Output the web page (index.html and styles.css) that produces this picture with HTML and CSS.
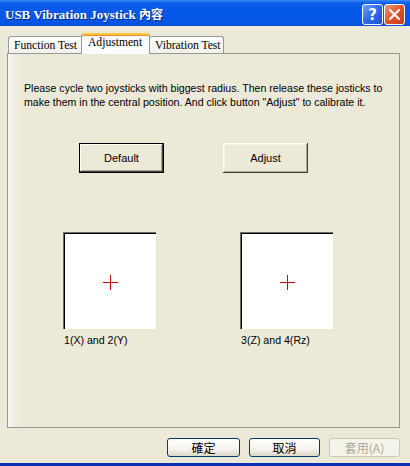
FILE: index.html
```html
<!DOCTYPE html>
<html>
<head>
    <title>USB Vibration Joystick 內容</title>
    <link rel="stylesheet" href="styles.css">
</head>
<body>
    <div class="window">
        <div class="titlebar">
            <span class="title">USB Vibration Joystick <span class="cjk">內容</span></span>
            <div class="caption-buttons">
                <div class="cap-btn help">?</div>
                <div class="cap-btn close">
                    <svg width="13" height="13" viewBox="0 0 13 13">
                        <path d="M2 2 L11 11 M11 2 L2 11" stroke="#fff" stroke-width="2.2" stroke-linecap="round"/>
                    </svg>
                </div>
            </div>
        </div>

        <div class="tabs">
            <div class="tab tab-function">Function Test</div>
            <div class="tab active">Adjustment</div>
            <div class="tab tab-vibration">Vibration Test</div>
        </div>

        <div class="panel">
            <p class="hint">Please cycle two joysticks with biggest radius. Then release these josticks to make them in the central position. And click button "Adjust" to calibrate it.</p>

            <div class="actions">
                <button class="classic default-btn">Default</button>
                <button class="classic">Adjust</button>
            </div>

            <div class="pads">
                <div class="pad">
                    <div class="pad-box"><div class="cross"></div></div>
                    <div class="pad-label">1(X) and 2(Y)</div>
                </div>
                <div class="pad">
                    <div class="pad-box"><div class="cross"></div></div>
                    <div class="pad-label">3(Z) and 4(Rz)</div>
                </div>
            </div>
        </div>

        <div class="footer">
            <button class="xp-btn ok">確定</button>
            <button class="xp-btn">取消</button>
            <button class="xp-btn" disabled>套用(A)</button>
        </div>
        <div class="frame-bottom"></div>
    </div>
</body>
</html>
```

FILE: styles.css
```css
body {
    margin: 0;
    background-color: #ece9d8;
    font-family: "Liberation Sans", Arial, sans-serif;
}
.window {
    width: 410px;
    height: 466px;
    display: flex;
    flex-direction: column;
    overflow: hidden;
}
.titlebar {
    height: 26px;
    flex-shrink: 0;
    display: flex;
    align-items: center;
    justify-content: space-between;
    padding: 0 5px 0 5px;
    background: linear-gradient(to bottom, #3b8cf6 0, #0a5ee8 3px, #0659ea 40%, #0455e4 85%, #0a4fd4 100%);
}
.title {
    color: #fff;
    font-family: "Liberation Serif", "Noto Sans CJK TC", serif;
    font-weight: bold;
    font-size: 13px;
    text-shadow: 1px 1px 0 #0a2a80;
    padding-top: 1px;
}
.title .cjk {
    font-family: "Noto Sans CJK TC", sans-serif;
    font-size: 12px;
}
.caption-buttons {
    display: flex;
    gap: 1px;
    padding-top: 3px;
}
.cap-btn {
    width: 19px;
    height: 19px;
    border: 1px solid #fff;
    border-radius: 3px;
    display: flex;
    align-items: center;
    justify-content: center;
    color: #fff;
}
.help {
    background: linear-gradient(135deg, #6fa0f8 0, #2f6ae8 50%, #1c4fd0 100%);
    font-family: "DejaVu Sans", sans-serif;
    font-weight: bold;
    font-size: 15px;
}
.close {
    background: linear-gradient(135deg, #f09a7a 0, #e0542a 50%, #c73a12 100%);
}
.tabs {
    height: 27px;
    flex-shrink: 0;
    display: flex;
    align-items: flex-end;
    padding-left: 8px;
    box-sizing: border-box;
    position: relative;
    z-index: 1;
}
.tab {
    height: 16px;
    box-sizing: content-box;
    padding-left: 5px;
    border: 1px solid #919b9c;
    border-bottom: none;
    border-radius: 3px 3px 0 0;
    background: linear-gradient(to bottom, #fefefe, #f2f1ea);
    font-family: "Liberation Serif", serif;
    font-size: 11.6px;
    line-height: 17px;
    color: #000;
    white-space: nowrap;
}
.tab-function {
    width: 68px;
}
.tab-vibration {
    width: 68px;
    border-left: none;
}
.tab.active {
    width: 61px;
    height: 19px;
    padding-left: 6px;
    margin-bottom: -1px;
    margin-left: -2px;
    border-top: 2px solid #ffc83c;
    background: #fcfcfe;
    line-height: 16px;
    box-shadow: inset 0 1px 0 #e68b2c;
}
.panel {
    height: 375px;
    flex-shrink: 0;
    margin: 0 10px 0 7px;
    border: 1px solid #919b9c;
    box-sizing: border-box;
    background: linear-gradient(to right, #f7f6f2 0, #ece9d8 12px);
    padding: 27px 10px 0 16px;
}
.hint {
    margin: 0;
    font-size: 10.6px;
    line-height: 14px;
    color: #000;
}
.actions {
    display: flex;
    gap: 59px;
    margin: 34px 0 0 55px;
}
button {
    font-family: "Liberation Sans", Arial, sans-serif;
    padding: 0;
    cursor: default;
}
.classic {
    width: 85px;
    height: 30px;
    background-color: #ece9d8;
    border: none;
    font-size: 11px;
    color: #000;
    box-shadow: inset -1px -1px 0 #404040, inset 1px 1px 0 #fff, inset -2px -2px 0 #aca899, inset 2px 2px 0 #f5f4ee;
}
.default-btn {
    border: 1px solid #000;
    box-shadow: inset -1px -1px 0 #404040, inset 1px 1px 0 #fff, inset -2px -2px 0 #aca899;
}
.pads {
    display: flex;
    gap: 84px;
    margin: 59px 0 0 39px;
}
.pad {
    display: flex;
    flex-direction: column;
}
.pad-box {
    width: 93px;
    height: 97px;
    box-sizing: border-box;
    background: #fff;
    border-top: 1px solid #6f6d62;
    border-left: 1px solid #6f6d62;
    box-shadow: inset 1px 1px 0 #000;
    padding: 42px 0 0 39px;
}
.cross {
    width: 15px;
    height: 15px;
    background:
        linear-gradient(#d20000, #d20000) 7px 0 / 1px 15px no-repeat,
        linear-gradient(#d20000, #d20000) 0 7px / 15px 1px no-repeat;
}
.pad-label {
    margin-top: 4px;
    padding-left: 1px;
    font-size: 10.6px;
    line-height: 14px;
}
.footer {
    flex-grow: 1;
    display: flex;
    justify-content: flex-end;
    align-items: flex-start;
    gap: 9px;
    padding: 10px 10px 0 0;
}
.xp-btn {
    width: 71px;
    height: 19px;
    border: 1px solid #003c74;
    border-radius: 3px;
    background: linear-gradient(to bottom, #ffffff 0, #f4f3ee 60%, #dcd8c8 100%);
    font-family: "Noto Sans CJK TC", sans-serif;
    font-size: 12px;
    line-height: 17px;
    color: #000;
}
.xp-btn.ok {
    width: 73px;
}
.xp-btn:disabled {
    border-color: #c9c7ba;
    background: #f5f4ea;
    color: #aca899;
}
.frame-bottom {
    height: 3px;
    flex-shrink: 0;
    background: #0a2fb0;
}
```
